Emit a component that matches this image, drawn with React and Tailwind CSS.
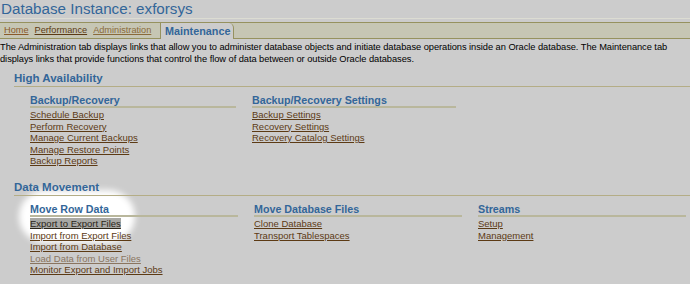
const HA = [
  {
    title: 'Backup/Recovery',
    width: 'w-[206px]',
    links: ['Schedule Backup', 'Perform Recovery', 'Manage Current Backups', 'Manage Restore Points', 'Backup Reports'],
  },
  {
    title: 'Backup/Recovery Settings',
    width: 'w-[204px]',
    links: ['Backup Settings', 'Recovery Settings', 'Recovery Catalog Settings'],
  },
]

const DM = [
  {
    title: 'Move Row Data',
    width: 'w-[208px]',
    links: ['Export to Export Files', 'Import from Export Files', 'Import from Database', 'Load Data from User Files', 'Monitor Export and Import Jobs'],
  },
  {
    title: 'Move Database Files',
    width: 'w-[208px]',
    links: ['Clone Database', 'Transport Tablespaces'],
  },
  {
    title: 'Streams',
    width: 'w-[208px]',
    links: ['Setup', 'Management'],
  },
]

function LinkItem({ label }) {
  if (label === 'Export to Export Files') {
    return (
      <div className="leading-[11.5px]">
        <a className="bg-[#a8a8a4] text-[#2a2418] underline decoration-[#2a2418]">{label}</a>
      </div>
    )
  }
  if (label === 'Load Data from User Files') {
    return (
      <div className="leading-[11.5px]">
        <a className="text-[#8a7560] underline">{label}</a>
      </div>
    )
  }
  return (
    <div className="leading-[11.5px]">
      <a className="text-[#5c3a14] underline">{label}</a>
    </div>
  )
}

function Group({ title, width, links }) {
  return (
    <div className={width}>
      <div className="text-[10.7px] font-bold text-[#336699] leading-[12px] border-b-2 border-[#b9b79c]">{title}</div>
      <div className="mt-[1px] text-[9.5px]">
        {links.map(l => (
          <LinkItem key={l} label={l} />
        ))}
      </div>
    </div>
  )
}

function Section({ title, groups }) {
  return (
    <div className="pl-[14px]">
      <div className="text-[11.5px] font-bold text-[#336699] leading-[14px] pb-[1px] border-b border-[#b4ad86]">{title}</div>
      <div className="flex pl-[16px] mt-[7px] gap-[16px]">
        {groups.map(g => (
          <Group key={g.title} {...g} />
        ))}
      </div>
    </div>
  )
}

export default function App() {
  return (
    <div className="relative w-[690px] h-[284px] overflow-hidden bg-[#cccccc] text-black" style={{ fontFamily: '"Liberation Sans", Arial, sans-serif' }}>
      <div className="absolute left-[19px] top-[190px] w-[116px] h-[53px] rounded-full bg-white blur-[3px]" />
      <div className="relative">
        <h1 className="text-[15.2px] leading-[18px] text-[#336699] pl-[1px] border-b border-[#dcdcd2]">Database Instance: exforsys</h1>
        <div className="mt-[3px] h-[17px] flex items-stretch bg-[#c6c6b4] border-y border-[#96925f]">
          <div className="w-[160px] flex items-center gap-[6px] pl-[4px] text-[9.2px]">
            <a className="text-[#8a5a2a] underline">Home</a>
            <a className="text-[#5c3a14] underline">Performance</a>
            <a className="text-[#8a6a3a] underline">Administration</a>
          </div>
          <div className="-mb-[1px] w-[74px] flex items-center pl-[4px] bg-[#cccccc] border-l border-r border-[#96925f] rounded-tr-[5px] text-[10.8px] font-bold text-[#336699]">
            Maintenance
          </div>
        </div>
        <p className="mt-[2px] text-[9.3px] leading-[12px] tracking-[-0.05px]">
          The Administration tab displays links that allow you to administer database objects and initiate database operations inside an Oracle database. The Maintenance tab displays links that provide functions that control the flow of data between or outside Oracle databases.
        </p>
        <div className="mt-[6px]">
          <Section title="High Availability" groups={HA} />
        </div>
        <div className="mt-[13.5px]">
          <Section title="Data Movement" groups={DM} />
        </div>
      </div>
    </div>
  )
}
